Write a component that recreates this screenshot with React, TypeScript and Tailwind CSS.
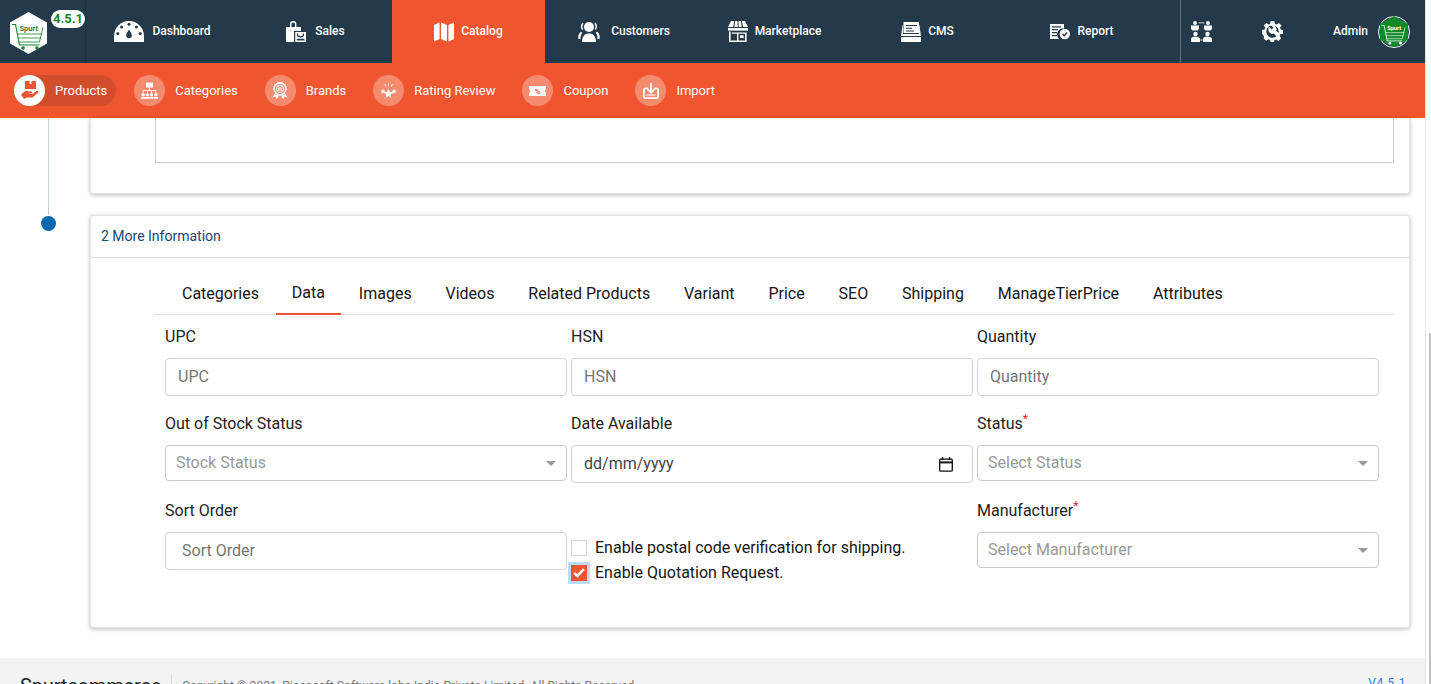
import React from 'react'

const DARK = '#243949'

const GaugeIcon = () => (
  <svg width="30" height="21" viewBox="0 0 30 21" fill="#fff">
    <path d="M0 21v-6A15 15 0 0 1 30 15v6z" />
    <g fill={DARK}>
      <circle cx="15" cy="3.2" r="1.5" />
      <circle cx="7.6" cy="6" r="1.5" />
      <circle cx="22.4" cy="6" r="1.5" />
      <circle cx="3.8" cy="12.4" r="1.5" />
      <circle cx="26.2" cy="12.4" r="1.5" />
      <path d="M15 8.5c1.4 2.6 2.8 4.4 2.8 6a2.8 2.8 0 0 1-5.6 0c0-1.6 1.4-3.4 2.8-6z" />
    </g>
  </svg>
)

const SalesIcon = () => (
  <svg width="20" height="21" viewBox="0 0 20 21" fill="#fff">
    <path d="M4 6V3.2a3.2 3.2 0 0 1 6.4 0V6H9V3.2a1.8 1.8 0 0 0-3.6 0V6z" />
    <path d="M0 6h15v4H8v11H0z" />
    <path d="M9.2 11H20v10H9.2zM11 12.6v1.6c0 3 7 3 7 0v-1.6h-1.2v1.4c0 1.6-4.600 1.600-4.600 0v-1.400zM10.800 17.800v1.800h7.600v-1.800z" fillRule="evenodd" />
  </svg>
)

const MapIcon = () => (
  <svg width="20" height="20" viewBox="0 0 20 20" fill="#fff">
    <path d="M0 3l5.600-2.600V17L0 19.600zM7 .4l6 2.600v16.600l-6-2.600zM14.400 3L20 .4V17l-5.600 2.600z" />
  </svg>
)

const CustomersIcon = () => (
  <svg width="22" height="21" viewBox="0 0 22 21" fill="#fff">
    <circle cx="11" cy="6" r="5" />
    <path d="M4 21c0-6 3-8.500 7-8.500s7 2.500 7 8.500c-2 .4-12 .4-14 0z" />
    <path d="M4.600 1.500C2.800 3 2.300 6.800 4.200 9l1-.8C4 6.500 4.400 3.800 5.600 2.600zM17.400 1.500C19.200 3 19.700 6.800 17.800 9l-1-.8c1.200-1.700.8-4.400-.4-5.600zM2.800 10.800C1 12 0 14.500 .2 17.500l2.200.8c0-3 .6-5 1.900-6.500zM19.200 10.800c1.800 1.200 2.800 3.700 2.600 6.700l-2.200.8c0-3-.6-5-1.900-6.500z" />
  </svg>
)

const StoreIcon = () => (
  <svg width="20" height="21" viewBox="0 0 20 21" fill="#fff">
    <path d="M3 0h3.200L5.200 6H0zM7.200 0h2.400v6H6.400zM10.600 0h2.300l.8 6h-3.100zM14 0h3l3 6h-5z" />
    <path d="M0 7h20v2.600H0z" />
    <path d="M1 10.500h1.600V19.400H9v-6.600H3.800v-1.400H18.600V21H1zM10.400 12.800V19.400H17v-6.600zM12 14.200h3.600v2.800H12z" fillRule="evenodd" />
  </svg>
)

const CmsIcon = () => (
  <svg width="20" height="21" viewBox="0 0 20 21" fill="#fff">
    <path d="M2.500 1h15.500v11H2.500zM5 4v1h11V4zM5 6.800v1h6V6.800zM5 9.400v1h8V9.400z" fillRule="evenodd" />
    <path d="M1.600 4H2v9h16V4h.4L20 15H0zM0 16h20v5H0z" />
  </svg>
)

const ReportIcon = () => (
  <svg width="20" height="16" viewBox="0 0 20 16" fill="#fff">
    <path d="M0 0h14v4.500a6 6 0 0 0-4.800 10.500H0zM2 2.200v1.200h9V2.200zM2 5v1.200h6V5zM2 8v1.200h5V8zM2 11v1.200h5.500V11z" fillRule="evenodd" />
    <circle cx="14.800" cy="10" r="5.200" />
    <path d="M12.400 10l1.800 1.800 3-3.200" fill="none" stroke={DARK} strokeWidth="1.400" />
  </svg>
)

const TeamIcon = () => (
  <svg width="21" height="21" viewBox="0 0 21 21" fill="#fff">
    <circle cx="4" cy="2" r="1.900" />
    <circle cx="17" cy="2" r="1.900" />
    <path d="M0 4.500h8v3.500L6.400 9.500H1.600L0 8zM13 4.500h8V8l-1.600 1.500h-4.800L13 8z" />
    <circle cx="4.500" cy="13" r="2.200" />
    <circle cx="16.500" cy="13" r="2.200" />
    <path d="M0 21v-3c0-1.500 2-2.500 4.500-2.500S9 16.500 9 18v3zM12 21v-3c0-1.500 2-2.500 4.500-2.500S21 16.500 21 18v3z" />
    <path d="M7.500 1.500h6v.8h-6zM9.400 18.500h2.200v.9H9.400z" />
  </svg>
)

const GearIcon = () => (
  <svg width="21" height="21" viewBox="0 0 21 21">
    <path
      fill="#fff"
      d="M8.600 0h3.800l.5 2.700 1.700.7 2.300-1.500 2.600 2.600-1.500 2.300.7 1.700L21 9v3.800l-2.700.5-.7 1.700 1.500 2.300-2.600 2.600-2.300-1.500-1.800.7-.5 2.500H8.600l-.5-2.600-1.700-.7-2.300 1.500-2.600-2.600L2 16l-.7-1.700L0 12.800V9l2.600-.5.7-1.700-1.500-2.300 2.600-2.600 2.300 1.500 1.400-.7z"
    />
    <circle cx="10.500" cy="10.500" r="6.200" fill={DARK} />
    <path fill="#fff" d="M7 5.800l2.700 2.600 1.800-1.800L8.800 4.400c2.600-1 5.700.8 5.700 3.900 0 .6-.1 1-.2 1.400l3 3-2.600 2.900-3.100-3c-3.400 1-6.600-2.600-4.600-6.800z" />
  </svg>
)

const navItems = [
  { label: 'Dashboard', icon: <GaugeIcon />, cls: 'gap-2' },
  { label: 'Sales', icon: <SalesIcon />, cls: 'gap-[9px]' },
  { label: 'Catalog', icon: <MapIcon />, cls: 'gap-[7px] bg-[#ef5630]' },
  { label: 'Customers', icon: <CustomersIcon />, cls: 'gap-[11px] pl-[5px]' },
  { label: 'Marketplace', icon: <StoreIcon />, cls: 'gap-[7px]' },
  { label: 'CMS', icon: <CmsIcon />, cls: 'gap-[7px]' },
  { label: 'Report', icon: <ReportIcon />, cls: 'gap-[7px] pl-[3px]' },
]

const CartLogo = ({ inverted, size }: { inverted?: boolean; size: number }) => {
  const ink = inverted ? '#fff' : '#14842b'
  return (
    <svg width={size} height={size * 1.135} viewBox="0 0 37 42">
      <path d="M18.500 0L37 10.500v21L18.500 42 0 31.500v-21z" fill={inverted ? '#128a2c' : '#fff'} />
      <text x="9.500" y="19" fontSize="7.500" fontWeight="700" fontFamily="Roboto, sans-serif" fill={ink}>
        Spurt
      </text>
      <g fill="none" stroke={ink} strokeWidth=".8">
        <path d="M2 12.500h3.500L9.500 33h20" strokeWidth="1.100" />
        <path d="M33 15l-3.500 15H8.500M7 22h25M8 26h23" />
      </g>
      <circle cx="13" cy="36" r="1.800" fill={ink} />
      <circle cx="27" cy="36" r="1.800" fill={ink} />
    </svg>
  )
}

const Header = () => (
  <div className="flex h-[63px] shrink-0 bg-[#243949]">
    <div className="relative w-[86px] border-r border-[#1f3240] pt-3 pl-[10px]">
      <CartLogo size={37} />
      <div className="absolute top-[10px] left-[51px] flex h-[18px] w-[34px] items-center justify-center rounded-full bg-white text-[13px] font-bold text-[#14842b]">
        4.5.1
      </div>
    </div>
    <div className="grid w-[1071px] grid-cols-7">
      {navItems.map((item) => (
        <div key={item.label} className={`flex items-center justify-center text-xs font-medium text-white ${item.cls}`}>
          {item.icon}
          <span className="pb-[2px]">{item.label}</span>
        </div>
      ))}
    </div>
    <div className="ml-[23px] flex flex-1 items-center border-l border-[#5d7282] pl-[10px] text-white">
      <TeamIcon />
      <div className="ml-[50px]">
        <GearIcon />
      </div>
      <span className="ml-[50px] pb-[2px] text-xs font-medium">Admin</span>
      <div className="ml-[10px] flex h-8 w-8 items-center justify-center rounded-full border border-white bg-[#243949]">
        <CartLogo inverted size={28} />
      </div>
    </div>
  </div>
)

const HandBoxIcon = () => (
  <svg width="20" height="20" viewBox="0 0 20 20" fill="#ef5630">
    <path d="M5 0h11v8H5zM9.500 0v3h2V0z" fillRule="evenodd" />
    <path d="M1 13.500l4-3.300c1.200-.7 2-.6 3 0h3c1.500 0 1.500 2.200 0 2.200H8.500v.6H12l4.500-3c1.400-.7 2.500.8 1.400 1.800L12.500 16.500H6.500l-2.500 1.600z" />
  </svg>
)

const OrgIcon = () => (
  <svg width="17" height="18" viewBox="0 0 20 20" fill="#fff">
    <path d="M6 0h8v6H6zM9.500 6h1v3h-1zM2 9h16v1H2z" />
    <path d="M2 10h1v3H2zM7 10h1v3H7zM12 10h1v3h-1zM17 10h1v3h-1z" />
    <circle cx="2.500" cy="14.500" r="2" />
    <circle cx="7.500" cy="14.500" r="2" />
    <circle cx="12.500" cy="14.500" r="2" />
    <circle cx="17.500" cy="14.500" r="2" />
    <path d="M0 17h5v2H0zM5.200 17h4.600v2H5.200zM10.200 17h4.600v2h-4.600zM15 17h5v2h-5z" />
  </svg>
)

const BadgeIcon = () => (
  <svg width="18" height="18" viewBox="0 0 20 21" fill="none" stroke="#fff">
    <circle cx="10" cy="8" r="7" strokeWidth="1.800" />
    <circle cx="10" cy="8" r="4.500" strokeWidth="1" />
    <path d="M7 8h6M10 4v8M8 5v6M12 5v6" strokeWidth=".8" />
    <path d="M1 18l4-1 1 3 2.500-4-5-2zM19 18l-4-1-1 3-2.500-4 5-2z" fill="#fff" stroke="none" />
  </svg>
)

const StarsIcon = () => (
  <svg width="17" height="17" viewBox="0 0 20 20" fill="#fff">
    <path d="M10 8l1.700 3.600 3.800.5-2.800 2.600.7 3.800L10 16.600 6.600 18.500l.7-3.800L4.500 12.100l3.800-.5z" />
    <path d="M3.500 8l1 2 2 .3-1.500 1.400.4 2-1.900-1-1.900 1 .4-2L.5 10.300l2-.3zM16.500 8l1 2 2 .3-1.500 1.400.4 2-1.900-1-1.900 1 .4-2-1.500-1.400 2-.3z" />
    <path d="M9.500 1h1v4h-1zM5 2.500l.9-.4 1.500 3-.9.4zM15 2.500l-.9-.4-1.500 3 .9.400z" />
  </svg>
)

const CouponIcon = () => (
  <svg width="17" height="10" viewBox="0 0 17 10" fill="#fff">
    <path d="M0 0h17v3.400a1.700 1.700 0 0 0 0 3.200V10H0V6.600a1.700 1.700 0 0 0 0-3.200z" />
    <text x="8.500" y="8" textAnchor="middle" fontSize="8" fontWeight="700" fontFamily="Roboto, sans-serif" fill="#ef5630">
      %
    </text>
  </svg>
)

const ImportIcon = () => (
  <svg width="16" height="16" viewBox="0 0 18 18" fill="none" stroke="#fff" strokeWidth="2">
    <path d="M5.500 6H3a2 2 0 0 0-2 2v7a2 2 0 0 0 2 2h12a2 2 0 0 0 2-2V8a2 2 0 0 0-2-2h-2.500" />
    <path d="M9 0v10M5 7l4 4 4-4" />
    <path d="M4 13.500h10" strokeWidth="1.400" />
  </svg>
)

const subItems = [
  { label: 'Products', icon: <HandBoxIcon />, active: true },
  { label: 'Categories', icon: <OrgIcon /> },
  { label: 'Brands', icon: <BadgeIcon /> },
  { label: 'Rating Review', icon: <StarsIcon /> },
  { label: 'Coupon', icon: <CouponIcon /> },
  { label: 'Import', icon: <ImportIcon /> },
]

const SubNav = () => (
  <div className="flex h-[55px] shrink-0 items-center gap-[18px] bg-[#ef5630] pl-[14px]">
    {subItems.map((item) => (
      <div
        key={item.label}
        className={`flex h-[31px] items-center gap-[10px] rounded-full pr-[9px] text-[13px] text-white ${item.active ? 'bg-[#d24d2b]' : ''}`}
      >
        <div className={`flex h-[31px] w-[31px] items-center justify-center rounded-full ${item.active ? 'bg-white' : 'bg-[#f48a6e]'}`}>
          {item.icon}
        </div>
        <span>{item.label}</span>
      </div>
    ))}
  </div>
)

const tabs = ['Categories', 'Data', 'Images', 'Videos', 'Related Products', 'Variant', 'Price', 'SEO', 'Shipping', 'ManageTierPrice', 'Attributes']

const Tabs = () => (
  <div className="mt-[13px] mr-[15px] ml-[64px] flex h-[44px] gap-[1.85px] border-b border-[#dfdfe6] pl-[11px] text-base text-[#151515]">
    {tabs.map((tab) =>
      tab === 'Data' ? (
        <div key={tab} className="-mb-[1px] -ml-[1px] flex items-center border-b-2 border-[#f0503c] px-4 pt-[1px]">
          {tab}
        </div>
      ) : (
        <div key={tab} className="flex items-center px-4 pt-[2px]">
          {tab}
        </div>
      ),
    )}
  </div>
)

const Label = ({ text, required }: { text: string; required?: boolean }) => (
  <div className="mb-[9px] h-6 text-base leading-6 text-[#222]">
    {text}
    {required && <sup className="text-xs text-[#e0262b]">*</sup>}
  </div>
)

const TextField = ({ label, indent }: { label: string; indent?: boolean }) => (
  <div>
    <Label text={label} />
    <input
      readOnly
      placeholder={label}
      className={`block h-[38px] w-full rounded-[4px] border border-[#d0d1da] pr-3 pb-[2px] text-base outline-none placeholder:text-[#757575] ${indent ? 'pl-4' : 'pl-3'}`}
    />
  </div>
)

const SelectField = ({ label, placeholder, required }: { label: string; placeholder: string; required?: boolean }) => (
  <div>
    <Label text={label} required={required} />
    <div className="flex h-[36px] items-center justify-between rounded-[4px] border border-[#c9c9c9] px-[10px] text-base text-[#999]">
      <span>{placeholder}</span>
      <div className="h-0 w-0 border-x-[5px] border-t-[5px] border-x-transparent border-t-[#999]" />
    </div>
  </div>
)

const CalendarIcon = () => (
  <svg width="14" height="15" viewBox="0 0 14 15" fill="none" stroke="#111">
    <rect x=".7" y="2.200" width="12.600" height="12" rx="1" strokeWidth="1.300" />
    <path d="M.7 5.400h12.600" strokeWidth="2" />
    <path d="M3.500 0v3M10.500 0v3" strokeWidth="1.500" />
  </svg>
)

const DateField = () => (
  <div>
    <Label text="Date Available" />
    <div className="flex h-[38px] items-center justify-between rounded-[4px] border border-[#d0d1da] pr-[19px] pl-3 text-base text-[#444]">
      <span>dd/mm/yyyy</span>
      <CalendarIcon />
    </div>
  </div>
)

const Checks = () => (
  <div className="pt-[36px] text-base text-[#151515]">
    <div className="flex h-[25px] items-center gap-2">
      <div className="h-4 w-4 border border-[#d6d6d6] bg-white" />
      <span>Enable postal code verification for shipping.</span>
    </div>
    <div className="flex h-[25px] items-center gap-2">
      <div className="flex h-4 w-4 items-center justify-center bg-[#ef5630] shadow-[0_0_0_3px_#bddcf8]">
        <svg width="12" height="10" viewBox="0 0 12 10" fill="none" stroke="#fff" strokeWidth="2.600">
          <path d="M1.200 5l3.200 3L10.800 1.200" />
        </svg>
      </div>
      <span>Enable Quotation Request.</span>
    </div>
  </div>
)

const Form = () => (
  <div className="mt-[10px] ml-[74px] grid w-[1214px] grid-cols-3 gap-x-1 gap-y-4">
    <TextField label="UPC" />
    <TextField label="HSN" />
    <TextField label="Quantity" />
    <SelectField label="Out of Stock Status" placeholder="Stock Status" />
    <DateField />
    <SelectField label="Status" placeholder="Select Status" required />
    <TextField label="Sort Order" indent />
    <Checks />
    <SelectField label="Manufacturer" placeholder="Select Manufacturer" required />
  </div>
)

const cardClass = 'flex-1 rounded-[3px] border border-[#e3e3e3] bg-white shadow-[0_1px_4px_rgba(0,0,0,0.28)]'

const Footer = () => (
  <div className="mt-[30px] flex h-[40px] shrink-0 items-start bg-[#f3f3f3] pt-4 pl-5">
    <span className="text-[20px] leading-6 tracking-[-0.15px] text-[#222]">Spurtcommerce</span>
    <div className="mx-[10px] h-[26px] w-[1px] bg-[#d8d8d8]" />
    <span className="pt-[2px] text-xs leading-5 tracking-[0.06px] text-[#777]">
      Copyright © 2021, Piccosoft Software labs India Private Limited. All Rights Reserved.
    </span>
    <span className="mr-[19px] ml-auto pt-[1px] text-xs tracking-[0.6px] text-[#2a7de1]">V4.5.1</span>
  </div>
)

export default function App() {
  return (
    <div className="flex h-[684px] w-full overflow-hidden bg-white font-['Roboto',sans-serif]">
      <div className="flex min-w-0 flex-1 flex-col">
        <Header />
        <SubNav />
        <div className="flex h-[97px] shrink-0">
          <div className="ml-[48px] h-full w-[1px] bg-[#c8d0da]" />
          <div className="mr-[15px] ml-[41px] h-[76px] flex-1 rounded-b-[3px] border-x border-b border-[#e3e3e3] shadow-[0_1px_4px_rgba(0,0,0,0.28)]">
            <div className="mr-[15px] ml-[64px] h-[45px] border-x border-b border-[#cfcfcf]" />
          </div>
        </div>
        <div className="flex shrink-0">
          <div className="mt-[1px] ml-[41px] h-[15px] w-[15px] rounded-full bg-[#0868ad]" />
          <div className={`mr-[15px] ml-[34px] h-[413px] ${cardClass}`}>
            <div className="flex h-[42px] items-center border-b border-[#dddde2] pb-[2px] pl-[10px] text-sm text-[#0c4a78]">2 More Information</div>
            <Tabs />
            <Form />
          </div>
        </div>
        <Footer />
      </div>
      <div className="w-[6px] shrink-0 border-l border-[#e6e6e6] pt-[333px] pl-[3px]">
        <div className="h-full bg-[#c1c1c1]" />
      </div>
    </div>
  )
}
